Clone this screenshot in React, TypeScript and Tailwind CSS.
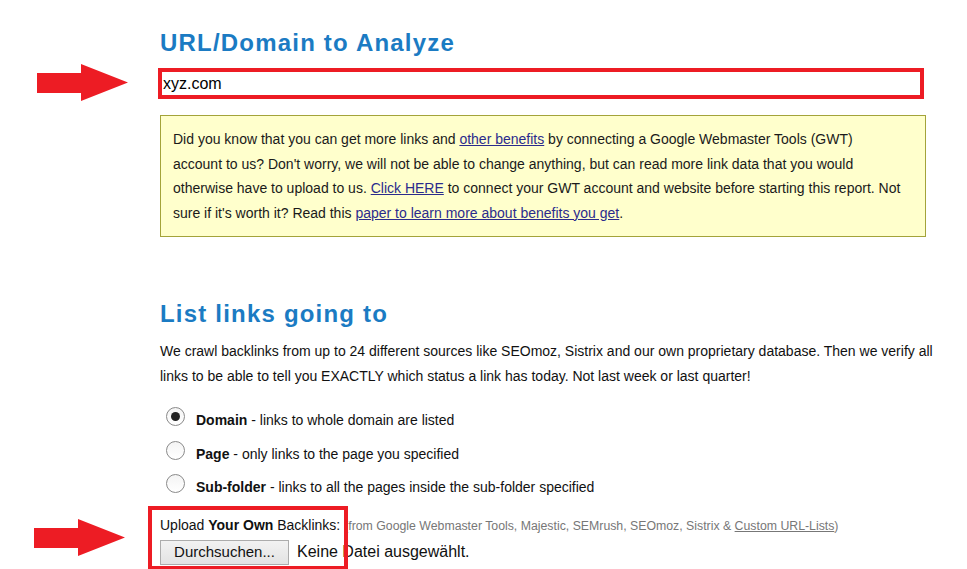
import React from "react";

function Arrow({ className }: { className: string }) {
  return (
    <svg className={className} width="96" height="40" viewBox="0 0 96 40">
      <path d="M2 9 H46 V0 L93 18.5 L46 37 V29 H2 Z" fill="#ed1c24" />
    </svg>
  );
}

function Radio({ checked }: { checked?: boolean }) {
  return (
    <span className="flex h-[19px] w-[19px] shrink-0 items-center justify-center rounded-full border border-[#8a8a8a] bg-gradient-to-b from-[#f4f4f4] to-white">
      {checked && <span className="h-[9px] w-[9px] rounded-full bg-[#222]" />}
    </span>
  );
}

const options = [
  { title: "Domain", text: " - links to whole domain are listed", checked: true },
  { title: "Page", text: " - only links to the page you specified" },
  { title: "Sub-folder", text: " - links to all the pages inside the sub-folder specified" },
];

export default function App() {
  return (
    <div className="relative h-[569px] w-[967px] overflow-hidden bg-white font-['Liberation_Sans',Arial,sans-serif] text-[#111]">
      <div className="w-[960px] pl-[160px] pt-[29px]">
        <h1 className="text-[24px] font-bold leading-[28px] tracking-[1.2px] text-[#1b7bc3]">
          URL/Domain to Analyze
        </h1>

        <div className="ml-[-2px] mt-[11px] h-[31px] w-[766px] border-[4px] border-[#ed1c24] bg-white pl-[1px] text-[16px] leading-[23px] text-black">
          xyz.com
        </div>

        <div className="mt-[16px] w-[766px] whitespace-nowrap border border-[#a3a33a] bg-[#ffffcc] px-[12px] py-[11px] text-[14px] leading-[24.5px] text-[#1a1a1a]">
          Did you know that you can get more links and{" "}
          <a className="text-[#2b2b8c] underline">other benefits</a> by connecting a
          Google Webmaster Tools (GWT)
          <br />
          account to us? Don't worry, we will not be able to change anything, but can
          read more link data that you would
          <br />
          otherwise have to upload to us.{" "}
          <a className="text-[#2b2b8c] underline">Click HERE</a> to connect your GWT
          account and website before starting this report. Not
          <br />
          sure if it's worth it? Read this{" "}
          <a className="text-[#2b2b8c] underline">paper to learn more about benefits you get</a>.
        </div>

        <h2 className="mt-[63px] text-[24px] font-bold leading-[28px] tracking-[1.2px] text-[#1b7bc3]">
          List links going to
        </h2>

        <p className="mt-[11px] whitespace-nowrap text-[14px] leading-[25px] text-[#111]">
          We crawl backlinks from up to 24 different sources like SEOmoz, Sistrix and our
          own proprietary database. Then we verify all
          <br />
          links to be able to tell you EXACTLY which status a link has today. Not last
          week or last quarter!
        </p>

        <div className="mt-[18px] flex flex-col pl-[6px]">
          {options.map((o) => (
            <div key={o.title} className="flex h-[33.5px] items-start gap-[11px] text-[14px] leading-[20px]">
              <Radio checked={o.checked} />
              <span className="mt-[3px]">
                <b>{o.title}</b>
                {o.text}
              </span>
            </div>
          ))}
        </div>

        <div className="mt-[8px] whitespace-nowrap text-[14px] leading-[18px]">
          Upload <b>Your Own</b> Backlinks:{" "}
          <span className="text-[12.3px] text-[#777]">
            (from Google Webmaster Tools, Majestic, SEMrush, SEOmoz, Sistrix &amp;{" "}
            <a className="underline">Custom URL-Lists</a>)
          </span>
        </div>

        <div className="mt-[5px] flex items-center gap-[8px] text-[16px]">
          <button
            type="button"
            className="h-[25px] w-[129px] border border-[#acacac] bg-gradient-to-b from-[#f2f2f2] to-[#e3e3e3] text-[15px] text-[#111]"
          >
            Durchsuchen...
          </button>
          <span className="text-[16px]">Keine Datei ausgewählt.</span>
        </div>
      </div>

      {/* annotations */}
      <div className="pointer-events-none absolute left-[148px] top-[506px] h-[64px] w-[200px] border-[4px] border-[#ed1c24]" />
      <Arrow className="absolute left-[35px] top-[64px]" />
      <Arrow className="absolute left-[32px] top-[519px]" />
    </div>
  );
}
